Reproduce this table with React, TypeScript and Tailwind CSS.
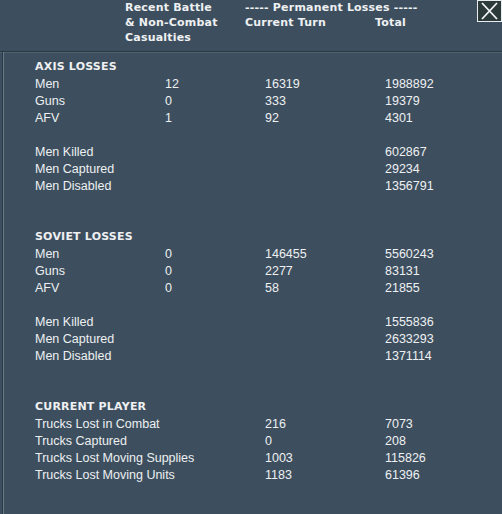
type Row = [string, string, string, string];

const sections: { title: string; groups: Row[][] }[] = [
  {
    title: 'AXIS LOSSES',
    groups: [
      [
        ['Men', '12', '16319', '1988892'],
        ['Guns', '0', '333', '19379'],
        ['AFV', '1', '92', '4301'],
      ],
      [
        ['Men Killed', '', '', '602867'],
        ['Men Captured', '', '', '29234'],
        ['Men Disabled', '', '', '1356791'],
      ],
    ],
  },
  {
    title: 'SOVIET LOSSES',
    groups: [
      [
        ['Men', '0', '146455', '5560243'],
        ['Guns', '0', '2277', '83131'],
        ['AFV', '0', '58', '21855'],
      ],
      [
        ['Men Killed', '', '', '1555836'],
        ['Men Captured', '', '', '2633293'],
        ['Men Disabled', '', '', '1371114'],
      ],
    ],
  },
  {
    title: 'CURRENT PLAYER',
    groups: [
      [
        ['Trucks Lost in Combat', '', '216', '7073'],
        ['Trucks Captured', '', '0', '208'],
        ['Trucks Lost Moving Supplies', '', '1003', '115826'],
        ['Trucks Lost Moving Units', '', '1183', '61396'],
      ],
    ],
  },
];

const bold = "font-['DejaVu_Sans',sans-serif] font-bold text-[11px] text-[#eef0f2] tracking-[0.2px]";

function DataRow({ row }: { row: Row }) {
  return (
    <div className="flex h-[17px] leading-[17px] whitespace-nowrap">
      <div className="w-[130px] shrink-0">{row[0]}</div>
      <div className="w-[100px] shrink-0">{row[1]}</div>
      <div className="w-[120px] shrink-0">{row[2]}</div>
      <div>{row[3]}</div>
    </div>
  );
}

export default function App() {
  return (
    <div className="relative w-[502px] h-[514px] overflow-hidden bg-[#3d4f5e] text-[#eef0f2]">
      <header className="h-[52px] border-b border-b-[#2a3845] shadow-[0_1px_0_#52636f]">
        <div className={`flex pl-[125px] ${bold} leading-[15px]`}>
          <div className="w-[120px]">
            <div>Recent Battle</div>
            <div>&amp; Non-Combat</div>
            <div>Casualties</div>
          </div>
          <div>
            <div>----- Permanent Losses -----</div>
            <div className="flex">
              <div className="w-[130px]">Current Turn</div>
              <div>Total</div>
            </div>
          </div>
        </div>
      </header>

      <button className="absolute top-0 right-0 w-[25px] h-[22px] bg-[#2c3b3a] border border-[#e8ecee] flex items-center justify-center">
        <svg width="19" height="18" viewBox="0 0 19 18">
          <path d="M2 1 L17 17 M17 1 L2 17" stroke="#f2f4f5" strokeWidth="1.8" />
        </svg>
      </button>

      <main className="ml-[3px] h-full border-l border-l-[#6b7a85] shadow-[-1px_0_0_#2a3845] pl-[31px] pt-[6px] font-['Liberation_Sans',Arial,sans-serif] text-[12.5px]">
        {sections.map((s, i) => (
          <section key={s.title} className={i > 0 ? 'mt-[33px]' : ''}>
            <div className={`${bold} h-[18px] leading-[18px]`}>{s.title}</div>
            {s.groups.map((g, j) => (
              <div key={j} className={j > 0 ? 'mt-[17px]' : ''}>
                {g.map(r => (
                  <DataRow key={r[0]} row={r} />
                ))}
              </div>
            ))}
          </section>
        ))}
      </main>
    </div>
  );
}
